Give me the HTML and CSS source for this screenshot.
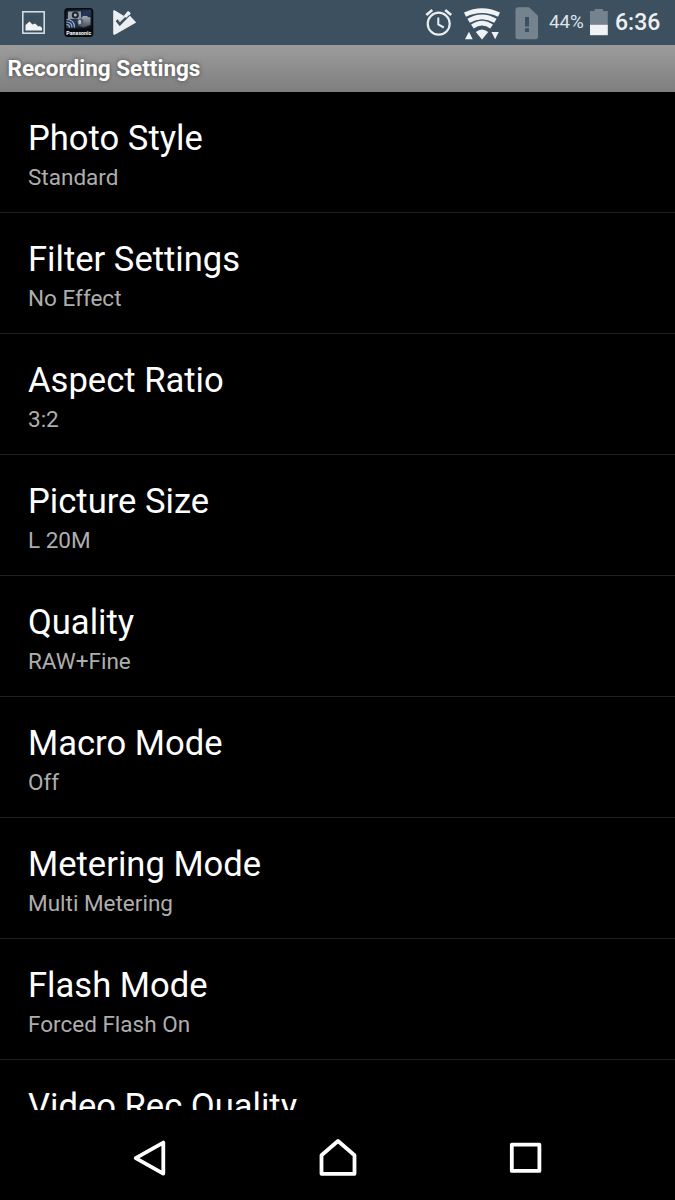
FILE: index.html
```html
<!DOCTYPE html>
<html lang="en">
<head>
<meta charset="utf-8">
<title>Recording Settings</title>
<link rel="stylesheet" href="styles.css">
</head>
<body>
<div class="screen">
  <div class="status">
    <div class="status-group notifications">
      <svg class="icon" width="24" height="45" viewBox="22 0 24 45">
        <rect x="22.8" y="11.8" width="21.4" height="21.4" fill="none" stroke="#dde3e7" stroke-width="1.5"/>
        <path d="M25.500 30.500V25L29.500 21.500l3 3 2.500-1 3.500 3 1.500-.5 2 2v2.500z" fill="#f2f4f6"/>
      </svg>
      <svg class="icon" width="30" height="45" viewBox="64 0 30 45">
        <defs>
          <linearGradient id="app" x1="0" y1="0" x2="1" y2="1"><stop offset="0" stop-color="#10131b"/><stop offset=".5" stop-color="#26395a"/><stop offset="1" stop-color="#0b0d12"/></linearGradient>
          <linearGradient id="cam" x1="0" y1="0" x2="0" y2="1"><stop offset="0" stop-color="#a5acb5"/><stop offset="1" stop-color="#424b58"/></linearGradient>
        </defs>
        <rect x="64.300" y="8" width="29" height="29" rx="3.500" fill="#08090d"/>
        <rect x="66" y="9.500" width="25.500" height="19" rx="1.500" fill="url(#app)"/>
        <rect x="68" y="11.500" width="13" height="7.500" fill="#8f99a4"/>
        <circle cx="75.300" cy="15" r="3.500" fill="#20242c"/>
        <circle cx="75.300" cy="15" r="1.500" fill="#b2bbc4"/>
        <path d="M78 18.500l4-1 1-1.500h4l1 1 2.500.5v7.500l-7 2.500-5.500-2z" fill="url(#cam)"/>
        <ellipse cx="80.500" cy="22" rx="3" ry="3.600" fill="#525c69"/>
        <ellipse cx="79.700" cy="22" rx="1.500" ry="2.200" fill="#b6bec7"/>
        <path d="M66.500 24.500q3 0 3 3M66.500 22q5.500 0 5.500 5.500M66.500 19.500q8 0 8 8" fill="none" stroke="#a9bdd7" stroke-width="1.100"/>
        <text class="app-name" x="66.300" y="34.500" textLength="25" lengthAdjust="spacingAndGlyphs">Panasonic</text>
      </svg>
      <svg class="icon" width="24" height="45" viewBox="113 0 24 45">
        <path d="M114.600 10.300L124 16L119.800 21L118 19L115.800 21.200L119.800 25.800L129.700 15.500L136.200 22.500L114.800 34.700Q113.200 35 113.200 33.500V11Q113.200 10 114.600 10.300z" fill="#edf0f2"/>
        <path d="M118 18.800l1.800 2.200 7.800-9.800 3 2.500-7 8-3.800 3.200-3-3.200z" fill="#edf0f2"/>
        <path d="M116.800 20.300l3 3.900 9.200-9.300" fill="none" stroke="#3d5060" stroke-width="2.400"/>
        <path d="M124.300 16l4.200-5 2.200 2.200-4.500 4.800z" fill="#edf0f2"/>
      </svg>
    </div>
    <div class="status-group system">
      <svg class="icon alarm" width="28" height="45" viewBox="425 0 28 45">
        <g fill="none" stroke="#e8edf0">
          <circle cx="438.700" cy="23.700" r="11" stroke-width="2.200"/>
          <path d="M426.300 15l6-5M451.200 15l-6-5" stroke-width="2.600"/>
          <path d="M438.300 17.500v7l5.500 3" stroke-width="2"/>
        </g>
      </svg>
      <svg class="icon wifi" width="38" height="45" viewBox="463 0 38 45">
        <path d="M465 14.600Q482 6.600 499 14.600M468.600 20.800Q482 12.800 495.400 20.800M472.400 26.500Q482 19.800 491.600 26.500" fill="none" stroke="#f0f3f5" stroke-width="4.700"/>
        <path d="M475.800 32q6.200-5 12.400 0L482 39.500z" fill="#f0f3f5"/>
        <path d="M465 39.200l4-7.500 3.700 7.500zM491.500 32h7.300l-3.700 7.300z" fill="#f0f3f5"/>
      </svg>
      <svg class="icon sim" width="24" height="45" viewBox="515 0 24 45">
        <path d="M518 7.300h11l9 8.500v21q0 2.500-2.500 2.500H518q-2.500 0-2.500-2.500v-27q0-2.500 2.500-2.500z" fill="#75838e"/>
        <path d="M525 17h4v9.500h-4zM525 28.300h4v3.700h-4z" fill="#3d5060"/>
      </svg>
      <span class="percent">44%</span>
      <svg class="icon battery" width="18" height="45" viewBox="590 0 18 45">
        <path d="M590 11h4.500V9h8.500v2h4.800v14H590z" fill="#75838e"/>
        <path d="M590 24.800h17.800v10.400H590z" fill="#f0f3f5"/>
      </svg>
      <span class="clock">6:36</span>
    </div>
  </div>
  <header class="title-bar">Recording Settings</header>
  <main class="list">
    <div class="row"><div class="name">Photo Style</div><div class="value">Standard</div></div>
    <div class="row"><div class="name">Filter Settings</div><div class="value">No Effect</div></div>
    <div class="row"><div class="name">Aspect Ratio</div><div class="value">3:2</div></div>
    <div class="row"><div class="name">Picture Size</div><div class="value">L 20M</div></div>
    <div class="row"><div class="name">Quality</div><div class="value">RAW+Fine</div></div>
    <div class="row"><div class="name">Macro Mode</div><div class="value">Off</div></div>
    <div class="row"><div class="name">Metering Mode</div><div class="value">Multi Metering</div></div>
    <div class="row"><div class="name">Flash Mode</div><div class="value">Forced Flash On</div></div>
    <div class="row"><div class="name">Video Rec Quality</div></div>
  </main>
  <nav class="nav">
    <svg width="40" height="44" viewBox="130 1136 40 44"><path d="M163.300 1142.600V1173.600L135.700 1158.200z"/></svg>
    <svg width="44" height="44" viewBox="316 1136 44 44"><path d="M321.500 1155.300L338 1141l16.500 14.300v18.500h-33z"/></svg>
    <svg width="40" height="44" viewBox="505 1136 40 44"><path d="M511.800 1144.700h27.600v26.200h-27.600z"/></svg>
  </nav>
</div>
</body>
</html>
```
FILE: styles.css
```css
* { box-sizing: border-box; }
body { margin: 0; background: #000; font-family: Roboto, "Liberation Sans", sans-serif; }
.screen { width: 675px; height: 1200px; display: flex; flex-direction: column; overflow: hidden; }
.status { flex: none; height: 45px; background: #3d5060; padding: 0 15px 0 22px; display: flex; justify-content: space-between; color: #edf0f2; }
.status-group { display: flex; align-items: center; }
.icon { display: block; flex: none; }
.notifications { gap: 18px; }
.notifications .icon:last-child { margin-left: 1px; }
.alarm { margin-right: 10px; }
.wifi { margin-right: 14px; }
.sim { margin-right: 10px; }
.percent { width: 41px; font-size: 18.8px; line-height: 47px; color: #dfe4e8; }
.battery { margin-right: 7px; }
.clock { width: 45px; font-size: 23px; font-weight: 500; line-height: 46px; white-space: nowrap; }
.app-name { font: bold 5.5px Roboto, sans-serif; fill: #fff; }
.title-bar { flex: none; height: 47px; padding-left: 7.5px; background: linear-gradient(#9c9c9c, #7e7e7e); color: #fff; font-size: 22.5px; font-weight: 700; line-height: 47px; text-shadow: 0 0 4px #444; }
.list { flex: none; height: 1018px; overflow: hidden; }
.row { height: 121px; padding: 25px 28px 0; border-bottom: 1px solid #202020; }
.name { color: #fff; font-size: 34.6px; line-height: 42px; white-space: nowrap; }
.value { margin-top: 4px; color: #aeaeae; font-size: 22.5px; line-height: 28px; }
.nav { flex: 1; padding: 26px 130px 0; display: flex; justify-content: space-between; align-items: flex-start; }
.nav path { fill: none; stroke: #fff; stroke-width: 3.8; stroke-linejoin: round; }
```
